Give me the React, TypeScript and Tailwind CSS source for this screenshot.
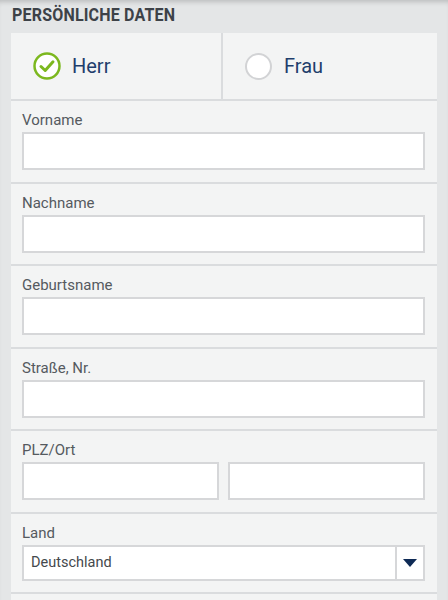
import React from "react";

const font = { fontFamily: "Roboto, 'Liberation Sans', sans-serif" };

function Field({ label, children }: { label: string; children?: React.ReactNode }) {
  return (
    <div className="border-b-2 border-[#dadcde] px-[11px] pt-[10px] pb-[11.5px] pr-[12px]">
      <div className="text-[15px] leading-[18px] text-[#555a5f]">{label}</div>
      <div className="mt-[3px]">{children ?? <div className="h-[38px] border-2 border-[#d6d7d9] bg-white" />}</div>
    </div>
  );
}

export default function App() {
  return (
    <div style={font} className="min-h-[600px] w-[448px] overflow-hidden bg-[#e4e6e7] shadow-[inset_0_5px_5px_-3px_rgba(0,0,0,0.18)]">
      <div className="h-[33px] pl-[12px] pt-[3px]">
        <h2 className="origin-left scale-x-[0.89] text-[18px] font-bold leading-[24px] tracking-[0.2px] text-[#3d4248]">
          PERSÖNLICHE DATEN
        </h2>
      </div>
      <div className="mx-[11px] bg-[#f3f4f4]">
        <div className="flex h-[68px] border-b-2 border-[#dadcde]">
          <div className="flex w-[212px] items-center border-r-2 border-[#dadcde] pl-[22px]">
            <svg width="28" height="28" viewBox="0 0 28 28">
              <circle cx="14" cy="14" r="12.5" fill="white" stroke="#7cb81f" strokeWidth="2.5" />
              <path d="M8 14.5 L12.2 18.5 L20 9.8" fill="none" stroke="#7cb81f" strokeWidth="3" strokeLinecap="round" strokeLinejoin="round" />
            </svg>
            <span className="ml-[11px] text-[20px] text-[#1f3e6c]">Herr</span>
          </div>
          <div className="flex flex-1 items-center pl-[22px]">
            <span className="h-[27px] w-[27px] rounded-full border-2 border-[#d2d3d5] bg-white" />
            <span className="ml-[12px] text-[20px] text-[#1f3e6c]">Frau</span>
          </div>
        </div>
        <Field label="Vorname" />
        <Field label="Nachname" />
        <Field label="Geburtsname" />
        <Field label="Straße, Nr." />
        <Field label="PLZ/Ort">
          <div className="flex gap-[9px]">
            <div className="h-[38px] flex-1 border-2 border-[#d6d7d9] bg-white" />
            <div className="h-[38px] flex-1 border-2 border-[#d6d7d9] bg-white" />
          </div>
        </Field>
        <Field label="Land">
          <div className="flex h-[36px] border-2 border-[#d6d7d9] bg-white">
            <div className="flex flex-1 items-center pl-[7px] text-[14.5px] text-[#45494d]">Deutschland</div>
            <div className="flex w-[28px] items-center justify-center border-l-2 border-[#d6d7d9]">
              <svg width="14" height="8" viewBox="0 0 14 8">
                <path d="M0 0 H14 L7 8 Z" fill="#0e2a55" />
              </svg>
            </div>
          </div>
        </Field>
        <div className="h-[40px]" />
      </div>
    </div>
  );
}
